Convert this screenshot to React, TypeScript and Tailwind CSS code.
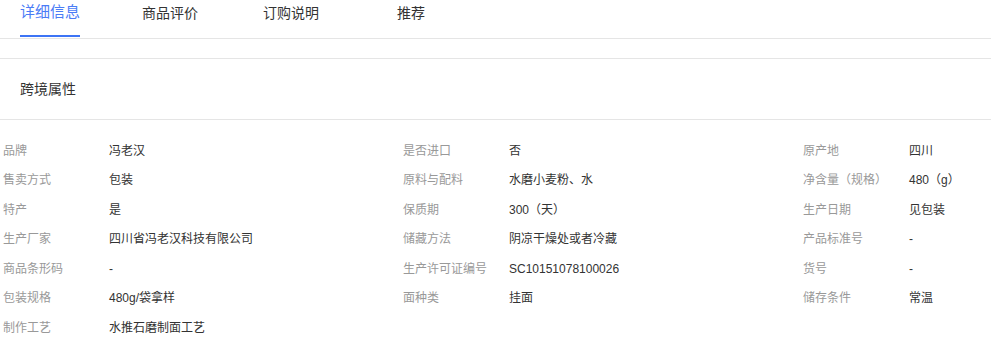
import React from 'react';

const tabs = [
  { name: '详细信息', active: true, cls: 'ml-[20px]' },
  { name: '商品评价', active: false, cls: 'ml-[62px]' },
  { name: '订购说明', active: false, cls: 'ml-[65px]' },
  { name: '推荐', active: false, cls: 'ml-[78px]' },
];

const rows: [string, string][][] = [
  [['品牌', '冯老汉'], ['是否进口', '否'], ['原产地', '四川']],
  [['售卖方式', '包装'], ['原料与配料', '水磨小麦粉、水'], ['净含量（规格）', '480（g）']],
  [['特产', '是'], ['保质期', '300（天）'], ['生产日期', '见包装']],
  [['生产厂家', '四川省冯老汉科技有限公司'], ['储藏方法', '阴凉干燥处或者冷藏'], ['产品标准号', '-']],
  [['商品条形码', '-'], ['生产许可证编号', 'SC10151078100026'], ['货号', '-']],
  [['包装规格', '480g/袋拿样'], ['面种类', '挂面'], ['储存条件', '常温']],
  [['制作工艺', '水推石磨制面工艺']],
];

const App: React.FC = () => {
  return (
    <div
      className="w-[991px] h-[344px] overflow-hidden bg-white text-[#333]"
      style={{ fontFamily: '"Liberation Sans", "Noto Sans CJK SC", sans-serif' }}
    >
      {/* tabs */}
      <div className="flex h-[39px] border-b border-[#e5e5e5]">
        {tabs.map(t => (
          <div key={t.name} className={`${t.cls} relative flex flex-col`}>
            <span
              className={
                t.active
                  ? 'text-[15px] leading-[24px] text-[#4a7cf6]'
                  : 'text-[14px] leading-[24px] pt-px text-[#333]'
              }
            >
              {t.name}
            </span>
            {t.active && <div className="absolute left-0 right-0 top-[35px] h-[2px] bg-[#3d74f5]" />}
          </div>
        ))}
      </div>

      <div className="h-[20px] border-b border-[#e5e5e5]" />

      {/* section header */}
      <div className="h-[61px] flex items-center pl-[20px] pt-[1px] border-b border-[#e5e5e5] text-[14px]">
        跨境属性
      </div>

      {/* attributes */}
      <div className="pt-[16px] pl-[3px] text-[12px]">
        {rows.map((row, i) => (
          <div key={i} className="flex h-[29.5px] items-center">
            {row.map(([label, value]) => (
              <div key={label} className="flex w-[400px] shrink-0">
                <span className="w-[106px] shrink-0 text-[#999]">{label}</span>
                <span className="text-[#333]">{value}</span>
              </div>
            ))}
          </div>
        ))}
      </div>
    </div>
  );
};

export default App;
